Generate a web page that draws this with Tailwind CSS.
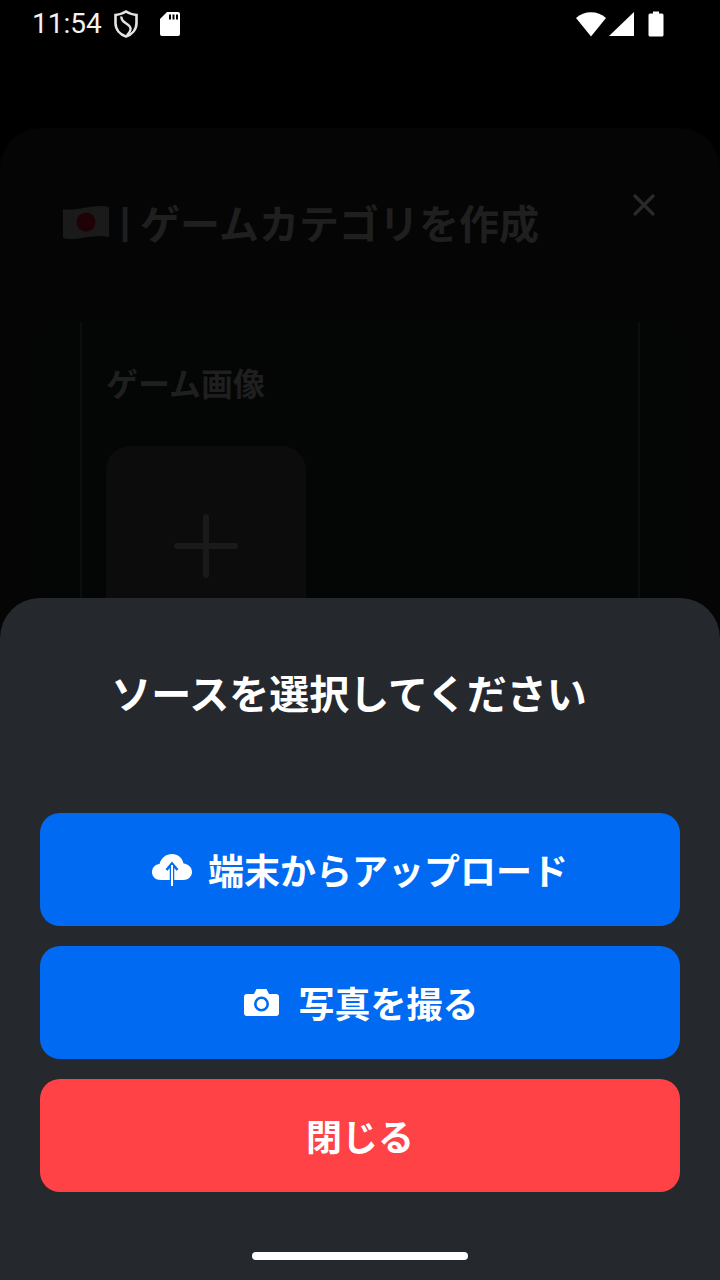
<!DOCTYPE html>
<html lang="ja">
<head>
  <meta charset="UTF-8" />
  <meta name="viewport" content="width=device-width, initial-scale=1.0"/>
  <title>ゲームカテゴリを作成</title>
  <script src="https://cdn.jsdelivr.net/npm/@tailwindcss/browser@4"></script>
</head>

<body class="bg-black">
  <div class="relative w-[720px] h-[1280px] overflow-hidden bg-black font-['Noto_Sans_CJK_JP','Noto_Sans',sans-serif]">

    <!-- status bar -->
    <div class="h-[48px] flex items-center justify-between pl-[32px] pr-[56px] text-white">
      <div class="flex items-center">
        <span class="font-['Roboto',sans-serif] text-[28px] leading-none text-[#f2f2f2]">11:54</span>
        <svg class="ml-[12px]" width="24" height="28" viewBox="0 0 24 28" fill="none" stroke="#e4e4e4" stroke-width="2.6">
          <path d="M12 1.5 C15 3.5 19 4.5 22.5 5 V13 C22.5 19.5 18 24.5 12 26.5 C6 24.5 1.5 19.5 1.5 13 V5 C5 4.5 9 3.5 12 1.5 Z" />
          <path d="M7.5 6.5 C6 13 16 13 16.5 18.5 C16.8 21 15 23 13 25" stroke-width="2.4" />
        </svg>
        <svg class="ml-[21px]" width="22" height="26" viewBox="0 0 22 26" fill="#fff">
          <path d="M8 1 H19 A2 2 0 0 1 21 3 V23 A2 2 0 0 1 19 25 H3 A2 2 0 0 1 1 23 V8 Z" />
          <path d="M10 3.5 h2 v5 h-2 z M13.5 3.5 h2 v5 h-2 z M17 3.5 h2 v5 h-2 z" fill="#000" />
        </svg>
      </div>
      <div class="flex items-center">
        <svg width="30" height="26" viewBox="0 0 30 26" fill="#fff">
          <path d="M0 7 C8 -0.8 22 -0.8 30 7 L15 25.5 Z" />
        </svg>
        <svg class="ml-[3px]" width="25" height="26" viewBox="0 0 25 26" fill="#fff">
          <path d="M25 1 V25 H0 Z" />
        </svg>
        <svg class="ml-[14px]" width="16" height="26" viewBox="0 0 16 26" fill="#fff">
          <path d="M5 0.5 H11 V2.5 H14 A1.5 1.5 0 0 1 15.5 4 V24 A1.5 1.5 0 0 1 14 25.5 H2 A1.5 1.5 0 0 1 0.5 24 V4 A1.5 1.5 0 0 1 2 2.5 H5 Z" />
        </svg>
      </div>
    </div>

    <!-- dimmed modal behind the sheet -->
    <div class="mt-[80px] h-[700px] rounded-t-[40px] bg-[#050505] relative">
      <div class="flex items-center pl-[63px] pt-[64px] text-[#1f1f1f]">
        <svg width="46" height="34" viewBox="0 0 46 34">
          <path d="M0 4 C14 7 30 -2 46 2 V32 C30 28 14 37 0 33 Z" fill="#1a1a1a" />
          <circle cx="23" cy="17" r="9.5" fill="#1f0206" />
        </svg>
        <span class="ml-[11px] font-['Liberation_Sans',sans-serif] text-[36px] font-bold leading-none">|</span>
        <span class="ml-[10px] text-[40px] leading-[60px] font-bold whitespace-nowrap">ゲームカテゴリを作成</span>
      </div>
      <svg class="absolute left-[632px] top-[65px]" width="24" height="24" viewBox="0 0 24 24" fill="none" stroke="#2a2a2a" stroke-width="3.2">
        <path d="M2 2 L22 22 M22 2 L2 22" />
      </svg>

      <div class="absolute left-[40px] right-[40px] top-[194px] bottom-0 bg-[#040505]">
        <div class="mx-[40px] h-full border-x-2 border-[#0d0d0d] pl-[24px] pt-[34px]">
          <p class="text-[32px] leading-[52px] font-bold text-[#1f1f1f]">ゲーム画像</p>
          <div class="mt-[38px] w-[200px] h-[200px] rounded-[24px] bg-[#0c0c0c] flex items-center justify-center">
            <svg width="64" height="64" viewBox="0 0 64 64" fill="none" stroke="#1a1a1a" stroke-width="6" stroke-linecap="round">
              <path d="M32 3 V61 M3 32 H61" />
            </svg>
          </div>
        </div>
      </div>
    </div>

    <!-- source picker sheet -->
    <div class="absolute left-0 right-0 bottom-0 h-[682px] rounded-t-[40px] bg-[#25282d] px-[40px] flex flex-col">
      <h2 class="mt-[64px] pr-[22px] text-center text-[40px] leading-[60px] font-bold text-white whitespace-nowrap">ソースを選択してください</h2>

      <div class="mt-[91px] flex flex-col gap-[20px]">
        <button class="h-[113px] rounded-[20px] bg-[#006af2] flex items-center justify-center text-white text-[36px] font-bold leading-none">
          <svg width="40" height="32" viewBox="0 0 40 32">
            <path d="M8.5 26 C3.5 26 0 22.5 0 18 C0 13.5 3.5 10.5 7.5 10 C9 4 14 0 20 0 C26 0 30.5 4 31.5 9.5 C36.5 10 40 13.5 40 18 C40 22.5 36 26 31.5 26 Z" fill="#fff" />
            <path d="M20 11 V26" stroke="#006af2" stroke-width="4.5" />
            <path d="M14.5 16 L20 9.5 L25.5 16" fill="none" stroke="#006af2" stroke-width="2.6" />
            <path d="M20 11 V32" stroke="#fff" stroke-width="2" />
          </svg>
          <span class="ml-[16px] pb-[2px]">端末からアップロード</span>
        </button>
        <button class="h-[113px] pl-[3px] rounded-[20px] bg-[#006af2] flex items-center justify-center text-white text-[36px] font-bold leading-none">
          <svg width="35" height="27" viewBox="0 0 35 27">
            <path d="M3 5 H10 L12.5 0 H22.5 L25 5 H32 A3 3 0 0 1 35 8 V24 A3 3 0 0 1 32 27 H3 A3 3 0 0 1 0 24 V8 A3 3 0 0 1 3 5 Z" fill="#fff" />
            <circle cx="17.5" cy="15" r="6.2" fill="none" stroke="#006af2" stroke-width="2.6" />
          </svg>
          <span class="ml-[19px] pb-[2px]">写真を撮る</span>
        </button>
        <button class="h-[113px] rounded-[20px] bg-[#ff4245] flex items-center justify-center text-white text-[36px] font-bold leading-none">
          <span class="pb-[2px]">閉じる</span>
        </button>
      </div>

      <div class="mt-auto mb-[20px] mx-auto w-[216px] h-[8px] rounded-full bg-white"></div>
    </div>
  </div>
</body>
</html>
